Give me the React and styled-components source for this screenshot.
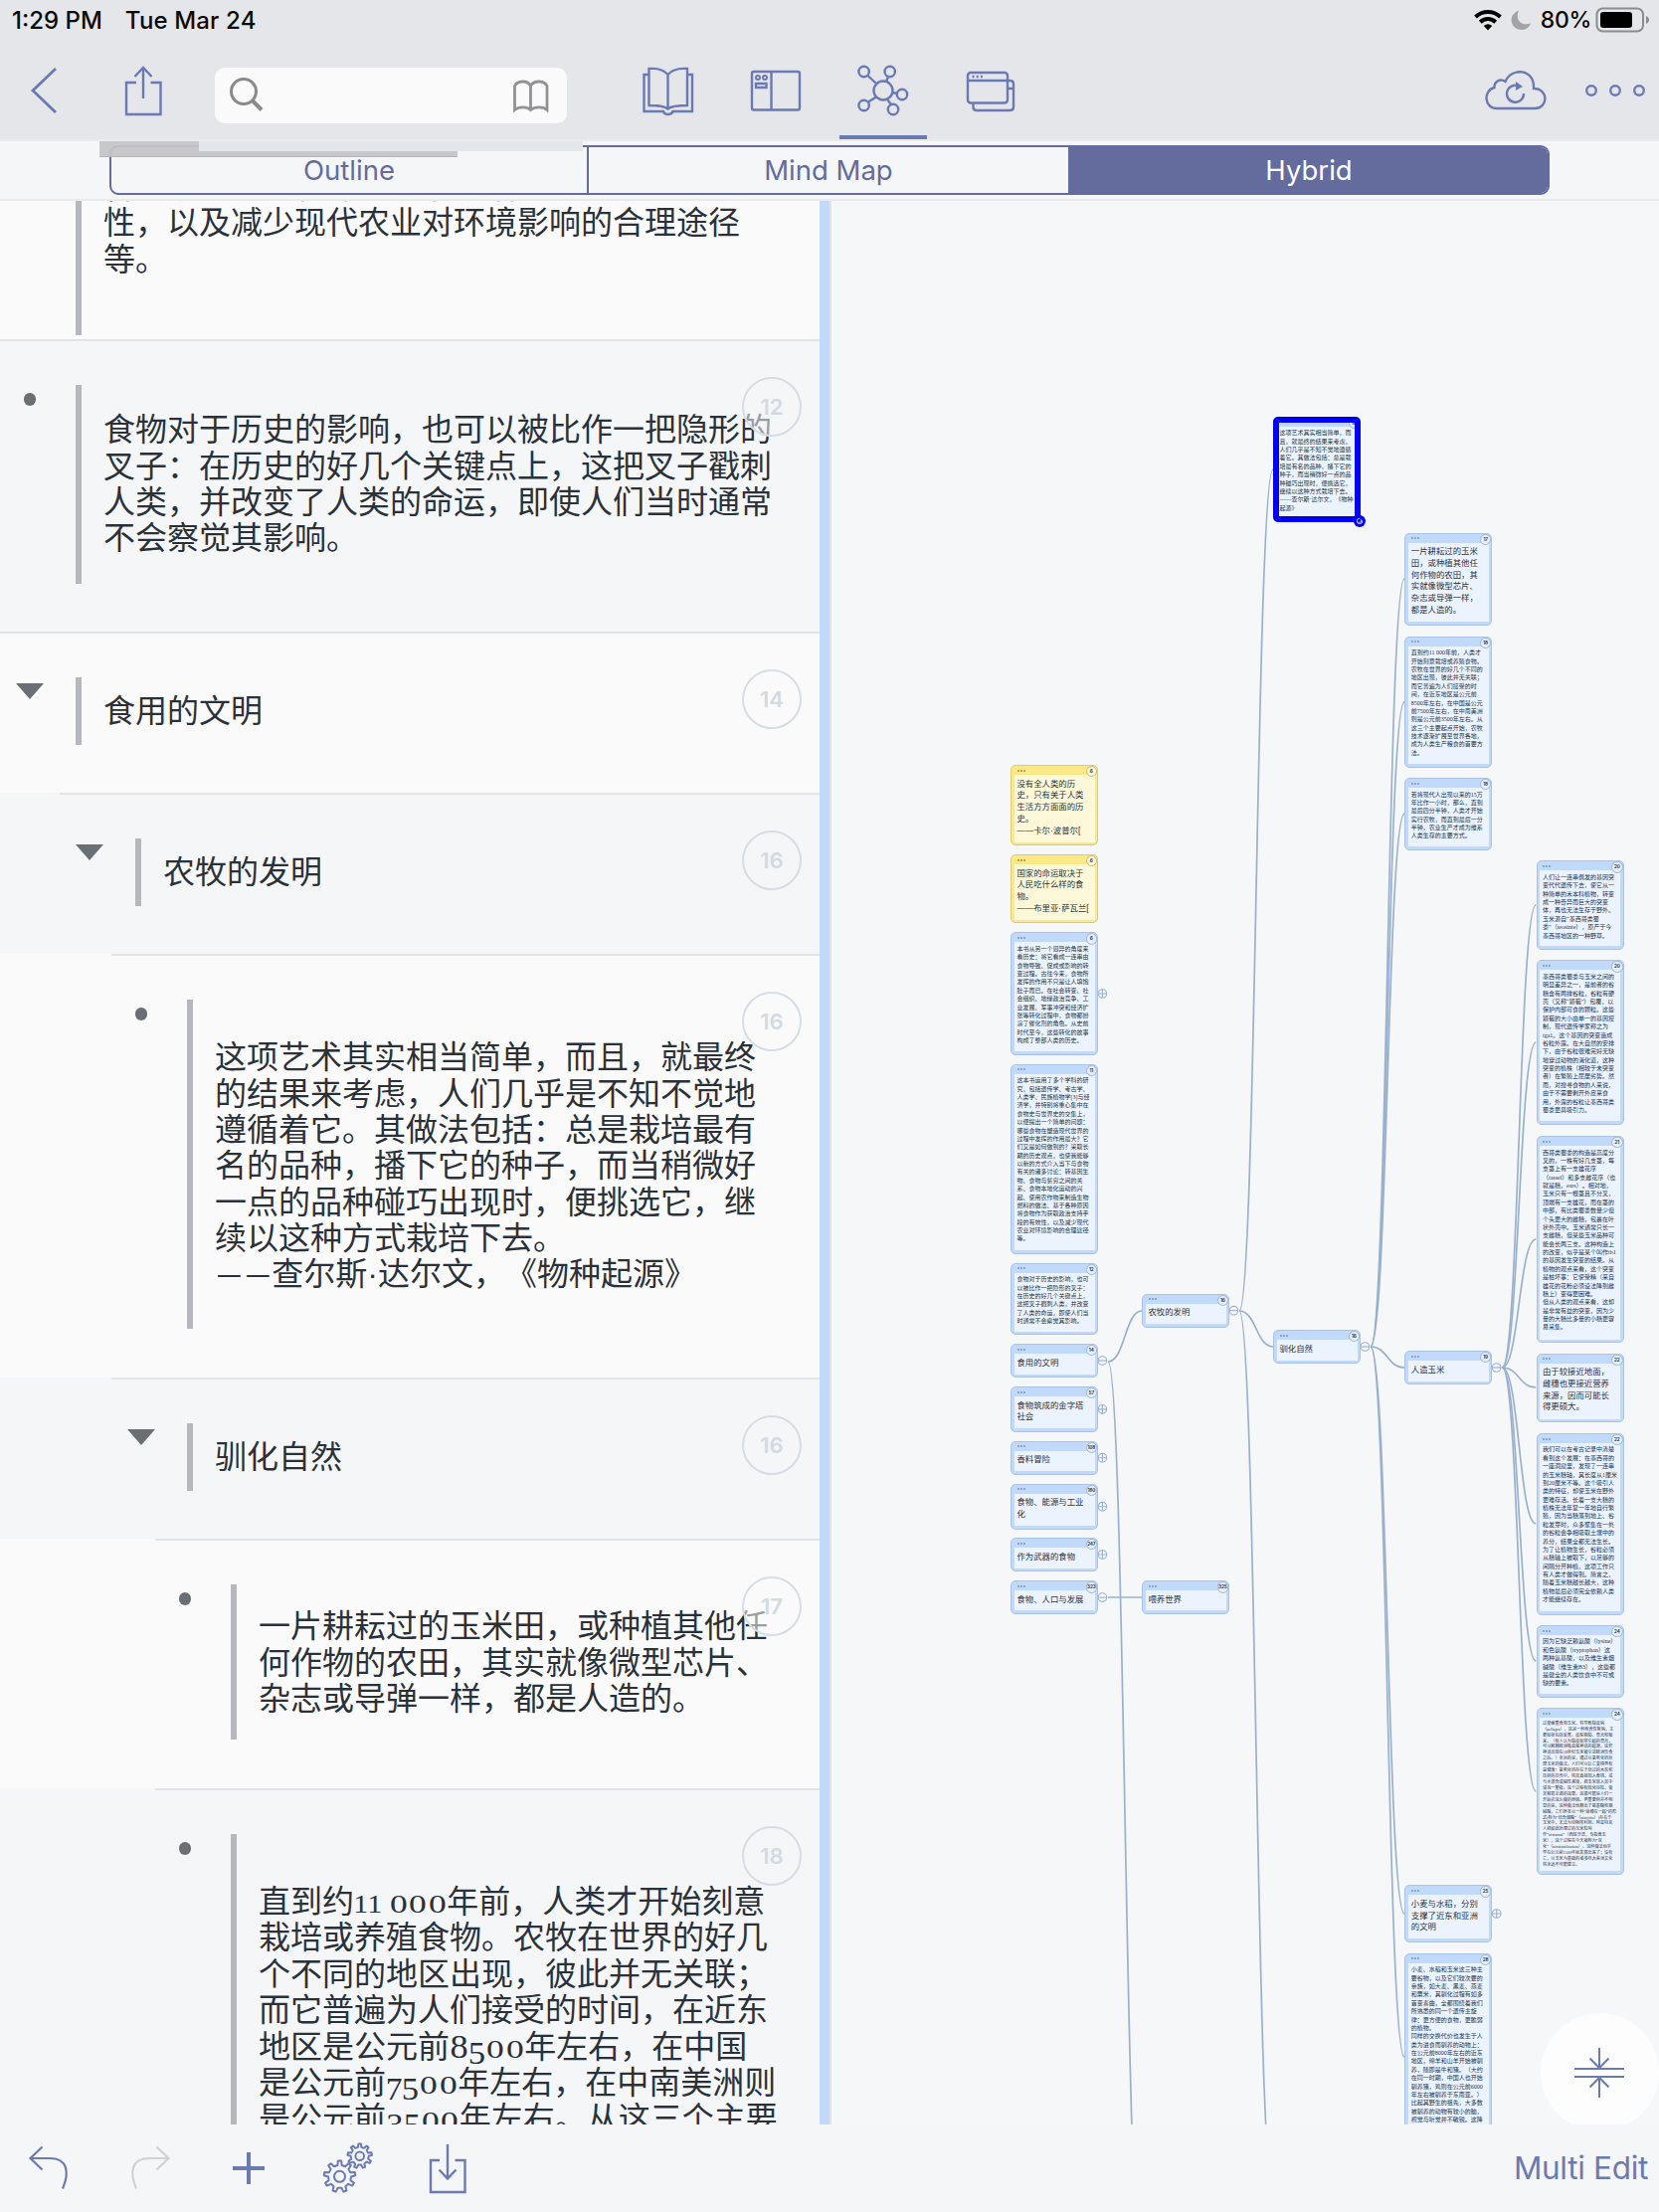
import React from "react";
import styled, { createGlobalStyle, css } from "styled-components";

const BLUE = "#6b7ab2";
const DEEP = "#636c9d";
const CJK = '"Noto Sans CJK SC", "Noto Sans", sans-serif';
const UI = 'Inter, "Liberation Sans", sans-serif';

const GlobalStyle = createGlobalStyle`
  html, body { margin: 0; padding: 0; background: #f4f6f8; }
  * { box-sizing: border-box; }
`;

const Screen = styled.div`
  width: 1668px;
  height: 2224px;
  display: flex;
  flex-direction: column;
  overflow: hidden;
  background: #f4f6f8;
  font-family: ${UI};
  text-spacing-trim: space-all;
`;

/* ---------- top bars ---------- */
const Header = styled.header`
  height: 142px;
  flex: none;
  display: flex;
  flex-direction: column;
  background: #e4e6ea;
  border-bottom: 2px solid #ebebed;
`;
const StatusBar = styled.div`
  height: 40px;
  display: flex;
  align-items: center;
  padding: 0 9px 0 12px;
  font-size: 24px;
  font-weight: 500;
  letter-spacing: 0;
  color: #0b0b0c;
  white-space: pre;
`;
const StatusDate = styled.span`
  margin-left: 23px;
  letter-spacing: 0.15px;
`;
const Charge = styled.span`
  margin-left: 9px;
  font-size: 23px;
  letter-spacing: -0.3px;
`;
const Spacer = styled.div`
  flex: 1;
`;
const Toolbar = styled.div`
  height: 100px;
  display: flex;
  align-items: flex-start;
`;
const Glyph = styled.svg`
  display: block;
  flex: none;
  margin-left: ${(p) => p.$gap || 0}px;
  fill: none;
  stroke: ${(p) => p.$ink || BLUE};
  stroke-width: ${(p) => p.$weight || 2.4};
`;
const SearchField = styled.div`
  width: 354px;
  height: 56px;
  margin: 28px 0 0 46px;
  padding: 0 17px 0 14px;
  border-radius: 10px;
  background: #fafafa;
  display: flex;
  align-items: center;
  justify-content: space-between;
`;
const ActiveTool = styled.div`
  width: 88px;
  height: 100px;
  margin-left: 32px;
  border-bottom: 4px solid ${BLUE};
`;

const SegmentBar = styled.div`
  position: relative;
  height: 60px;
  flex: none;
  padding: 4px 110px 0;
  border-bottom: 2px solid #e9eaec;
`;
const Segments = styled.div`
  display: flex;
  height: 50px;
  border: 2px solid ${DEEP};
  border-radius: 9px;
  overflow: hidden;
`;
const Segment = styled.div`
  width: ${(p) => p.$w}px;
  flex: none;
  display: flex;
  align-items: center;
  justify-content: center;
  font-size: 27.5px;
  color: ${(p) => (p.$on ? "#fff" : DEEP)};
  background: ${(p) => (p.$on ? DEEP : "transparent")};
  border-left: ${(p) => (p.$first ? 0 : 2)}px solid ${DEEP};
`;
const LoadingShade = styled.div`
  position: absolute;
  left: 100px;
  top: 0;
  width: 360px;
  height: 15.5px;
  background: rgba(197, 196, 201, 0.94);
  border-bottom: 1px solid #b4b4b8;
`;
const LoadingTrack = styled.div`
  position: absolute;
  left: 200px;
  top: 0;
  width: 386px;
  height: 10px;
  background: #e3e6ea;
`;

/* ---------- outline ---------- */
const Body = styled.main`
  height: 1934px;
  flex: none;
  display: flex;
`;
const Outline = styled.section`
  width: 824px;
  overflow: hidden;
`;
const Splitter = styled.div`
  width: 12px;
  background: #c1daf9;
  border-right: 2px solid #e2e3e6;
`;
const Row = styled.div`
  position: relative;
  height: ${(p) => p.$h}px;
  overflow: hidden;
  background: ${(p) => (p.$alt ? "#f4f6f8" : "#fafafa")};
`;
const Rule = styled.div`
  height: 2px;
  margin-left: ${(p) => p.$indent}px;
  background: #e2e3e4;
`;
const RowInner = styled.div`
  display: flex;
  align-items: flex-start;
  padding: ${(p) => p.$top}px 0 0 ${(p) => p.$indent}px;
`;
const Lead = styled.div`
  width: 76px;
  padding-right: 16px;
  display: flex;
  justify-content: center;
`;
const Bullet = styled.i`
  width: 12.5px;
  height: 12.5px;
  margin-top: 8px;
  border-radius: 50%;
  background: #6a6e75;
`;
const Arrow = styled.i`
  margin-top: 6px;
  border: 14px solid transparent;
  border-top: 16px solid #6a6e75;
  border-bottom: 0;
`;
const Quote = styled.div`
  height: ${(p) => p.$h}px;
  padding: ${(p) => p.$pad || 0}px 0 ${(p) => p.$lift || 0}px 22px;
  border-left: 6px solid #b5b9bd;
  display: flex;
  align-items: ${(p) => (p.$pad === undefined ? "center" : "flex-start")};
`;
const RowText = styled.div`
  font-family: ${CJK};
  font-size: 32px;
  line-height: 36.4px;
  color: #2b3138;
  white-space: pre;
  margin-top: ${(p) => p.$shift || 0}px;
`;
const Line = styled.div`
  height: 36.4px;
`;
const Digit = styled.span`
  display: inline-block;
  width: ${(p) => p.$w}px;
  font-family: "Liberation Serif", serif;
  font-size: ${(p) => p.$s}px;
  line-height: 24px;
  text-align: center;
  transform: scaleX(${(p) => p.$x});
  vertical-align: ${(p) => p.$v}px;
`;
const MidDot = styled.span`
  font-family: "Liberation Sans", sans-serif;
`;
const Dash = styled.span`
  display: inline-block;
  line-height: 24px;
  transform: scaleX(0.88);
`;
const PageBadge = styled.div`
  position: absolute;
  left: 746px;
  top: 38px;
  width: 60px;
  height: 60px;
  border: 2px solid #d6dde5;
  border-radius: 50%;
  background: ${(p) => (p.$alt ? "rgba(244,246,248,.55)" : "rgba(250,250,250,.55)")};
  display: flex;
  align-items: center;
  justify-content: center;
  font-size: 22px;
  font-weight: 600;
  color: #d3dae3;
`;

/* ---------- mind map ---------- */
const Canvas = styled.section`
  position: relative;
  width: 832px;
  height: 1934px;
  overflow: hidden;
  background: #f5f7f9;
`;
const Links = styled.svg`
  position: absolute;
  inset: 0;
  fill: none;
  stroke: #9ab1ce;
  stroke-width: 1.7;
`;
const Card = styled.div`
  position: absolute;
  left: ${(p) => p.$x - 836}px;
  top: ${(p) => p.$y - 202}px;
  width: 88px;
  height: ${(p) => p.$h}px;
  padding: 9px 2.5px 2.5px;
  border-radius: 5px;
  border: 1px solid ${(p) => (p.$yellow ? "#dccb76" : "#aac3e2")};
  background: ${(p) => (p.$yellow ? "#fae986" : "#c1dafb")};
`;
const CardDots = styled.div`
  position: absolute;
  left: 5.5px;
  top: 3.8px;
  display: flex;
  gap: 1px;
  i {
    width: 2px;
    height: 2px;
    background: ${(p) => (p.$yellow ? "#b5a65c" : "#8ea8c8")};
  }
`;
const CardBody = styled.div`
  height: 100%;
  padding: ${(p) => (p.$size === "l" ? 3.5 : 2.6)}px 0 0 3px;
  background: ${(p) => (p.$yellow ? "#fdf8d8" : "#ebf3fe")};
  color: #2b323c;
  white-space: pre;
  ${(p) =>
    p.$size === "l"
      ? css`font: 8.4px/11.75px "Liberation Sans", ${CJK};`
      : p.$size === "s"
      ? css`font: 6px/8.37px "Liberation Serif", ${CJK};`
      : css`font: 4.15px/5.92px "Liberation Serif", ${CJK};`}
`;
const CardBadge = styled.div`
  position: absolute;
  right: 0;
  top: 0;
  width: 11.4px;
  height: 11.4px;
  border-radius: 50%;
  border: 1px solid ${(p) => (p.$yellow ? "#c9bb78" : "#9fb6d3")};
  background: ${(p) => (p.$yellow ? "#fdf6cf" : "#e3eefc")};
  display: flex;
  align-items: center;
  justify-content: center;
  font-size: 4.6px;
  font-weight: 700;
  letter-spacing: -0.1px;
  color: #333a44;
`;
const Selection = styled.div`
  position: absolute;
  inset: -1px;
  border: 6px solid #0000f2;
  border-radius: 5px;
`;
const SelectionKnob = styled.svg`
  position: absolute;
  right: -6px;
  bottom: -6px;
`;
const Fab = styled.div`
  position: absolute;
  left: 712.5px;
  top: 1822px;
  width: 119px;
  height: 119px;
  border-radius: 50%;
  background: #fdfdfd;
  display: flex;
  align-items: center;
  justify-content: center;
`;

/* ---------- bottom bar ---------- */
const BottomBar = styled.footer`
  height: 88px;
  flex: none;
  display: flex;
  align-items: flex-start;
`;
const MultiEdit = styled.span`
  margin: 12px 11px 0 0;
  font-size: 31.5px;
  line-height: 64px;
  letter-spacing: -0.3px;
  color: ${BLUE};
`;

/* text figures [advance, size, shift, stretch]: x-height 0-2, descending 3 4 5 7 9 */
const FIGURES = {
  0: [19.6, 25, 0, 1.42], 1: [13.7, 25, 0, 1.2], 2: [18, 25, 0, 1.3],
  3: [17.6, 32, -6, 1.08], 4: [18, 32, -6, 1.08], 5: [17, 32, -6, 1.08],
  6: [19, 33, 0, 1.1], 7: [16.1, 32, -6, 1.05], 8: [19, 33, 0, 1.1], 9: [19, 32, -6, 1.08],
};
const figures = (text) =>
  text.split(/([0-9·—])/).map((c, i) => {
    const f = c.length === 1 && FIGURES[c];
    if (f) return <Digit key={i} $w={f[0]} $s={f[1]} $v={f[2]} $x={f[3]}>{c}</Digit>;
    if (c === "—") return <Dash key={i}>{c}</Dash>;
    return c === "·" ? <MidDot key={i}>{c}</MidDot> : c;
  });

const ROWS = [
  { h: 139, indent: 0, bar: 135, pad: 0, top: 0, shift: -35, noRule: true, lines: ["各种原因将食物作为获取政治支持手段的有效", "性，以及减少现代农业对环境影响的合理途径", "等。"] },
  { h: 294, indent: 0, bar: 200, lift: 6, lead: "dot", page: 12, lines: ["食物对于历史的影响，也可以被比作一把隐形的", "叉子：在历史的好几个关键点上，这把叉子戳刺", "人类，并改变了人类的命运，即使人们当时通常", "不会察觉其影响。"] },
  { h: 162, indent: 0, bar: 68, lift: 5, lead: "arrow", page: 14, lines: ["食用的文明"] },
  { h: 162, indent: 60, bar: 68, lift: 5, lead: "arrow", page: 16, lines: ["农牧的发明"] },
  { h: 426, indent: 112, bar: 331, lift: 2, lead: "dot", page: 16, lines: ["这项艺术其实相当简单，而且，就最终", "的结果来考虑，人们几乎是不知不觉地", "遵循着它。其做法包括：总是栽培最有", "名的品种，播下它的种子，而当稍微好", "一点的品种碰巧出现时，便挑选它，继", "续以这种方式栽培下去。", "——查尔斯·达尔文，《物种起源》"] },
  { h: 162, indent: 112, bar: 68, lift: 5, lead: "arrow", page: 16, lines: ["驯化自然"] },
  { h: 251, indent: 156, bar: 156, lift: 4, lead: "dot", page: 17, lines: ["一片耕耘过的玉米田，或种植其他任", "何作物的农田，其实就像微型芯片、", "杂志或导弹一样，都是人造的。"] },
  { h: 338, indent: 156, bar: 500, pad: 47, lead: "dot", page: 18, lines: ["直到约11 000年前，人类才开始刻意", "栽培或养殖食物。农牧在世界的好几", "个不同的地区出现，彼此并无关联；", "而它普遍为人们接受的时间，在近东", "地区是公元前8500年左右，在中国", "是公元前7500年左右，在中南美洲则", "是公元前3500年左右。从这三个主要"] },
];

const C = [1016, 1148, 1280, 1412.3, 1544.5];
const NODES = [
  { x: C[0], y: 769, h: 81, n: 6, s: "l", yellow: true, t: "没有全人类的历\n史，只有关于人类\n生活方方面面的历\n史。\n——卡尔·波普尔[" },
  { x: C[0], y: 859, h: 69, n: 6, s: "l", yellow: true, t: "国家的命运取决于\n人民吃什么样的食\n物。\n——布里亚·萨瓦兰[" },
  { x: C[0], y: 937.3, h: 123.4, n: 6, s: "s", g: "+", t: "本书从另一个迥异的角度来\n看历史：将它看成一连串由\n食物导致、促成或影响的转\n变过程。古往今来，食物所\n发挥的作用不只是让人填饱\n肚子而已。在社会转变、社\n会组织、地缘政治竞争、工\n业发展、军事冲突和经济扩\n张等转化过程中，食物都扮\n演了催化剂的角色。从史前\n时代至今，这些转化的故事\n构成了整部人类的历史。" },
  { x: C[0], y: 1069.7, h: 191, n: 11, s: "s", t: "这本书运用了多个学科的研\n究，包括遗传学、考古学、\n人类学、民族植物学[3]与经\n济学，并特别将重心集中在\n食物史与世界史的交集上，\n以便提出一个简单的问题：\n哪些食物在塑造现代世界的\n过程中发挥的作用最大？它\n们又是如何做到的？采取长\n期的历史观点，也使我能够\n以新的方式介入当下与食物\n有关的诸多讨论：转基因生\n物、食物与贫穷之间的关\n系、食物本地化运动的兴\n起、使用农作物来制造生物\n燃料的做法、基于各种原因\n将食物作为获取政治支持手\n段的有效性，以及减少现代\n农业对环境影响的合理途径\n等。" },
  { x: C[0], y: 1269.7, h: 72.6, n: 12, s: "s", t: "食物对于历史的影响，也可\n以被比作一把隐形的叉子：\n在历史的好几个关键点上，\n这把叉子戳刺人类，并改变\n了人类的命运，即使人们当\n时通常不会察觉其影响。" },
  { x: C[0], y: 1351, h: 34, n: 14, s: "l", g: "-", t: "食用的文明" },
  { x: C[0], y: 1394, h: 45.7, n: 57, s: "l", g: "+", t: "食物筑成的金字塔\n社会" },
  { x: C[0], y: 1448.7, h: 34, n: 108, s: "l", g: "+", t: "香料冒险" },
  { x: C[0], y: 1491.7, h: 46, n: 180, s: "l", g: "+", t: "食物、能源与工业\n化" },
  { x: C[0], y: 1546, h: 34, n: 247, s: "l", g: "+", t: "作为武器的食物" },
  { x: C[0], y: 1589.3, h: 33.6, n: 323, s: "l", g: "-", t: "食物、人口与发展" },
  { x: C[1], y: 1300.7, h: 34, n: 16, s: "l", g: "-", t: "农牧的发明" },
  { x: C[1], y: 1589.3, h: 33.6, n: 325, s: "l", t: "喂养世界" },
  { x: C[2], y: 418.7, h: 106.6, n: 16, s: "s", sel: true, t: "这项艺术其实相当简单，而\n且，就最终的结果来考虑，\n人们几乎是不知不觉地遵循\n着它。其做法包括：总是栽\n培最有名的品种，播下它的\n种子，而当稍微好一点的品\n种碰巧出现时，便挑选它，\n继续以这种方式栽培下去。\n——查尔斯·达尔文，《物种\n起源》" },
  { x: C[2], y: 1337, h: 34, n: 16, s: "l", g: "-", t: "驯化自然" },
  { x: C[3], y: 535.7, h: 93, n: 17, s: "l", t: "一片耕耘过的玉米\n田，或种植其他任\n何作物的农田，其\n实就像微型芯片、\n杂志或导弹一样，\n都是人造的。" },
  { x: C[3], y: 639.7, h: 132, n: 18, s: "s", t: "直到约11 000年前，人类才\n开始刻意栽培或养殖食物。\n农牧在世界的好几个不同的\n地区出现，彼此并无关联；\n而它普遍为人们接受的时\n间，在近东地区是公元前\n8500年左右，在中国是公元\n前7500年左右，在中南美洲\n则是公元前3500年左右。从\n这三个主要起点开始，农牧\n技术逐渐扩展至世界各地，\n成为人类生产粮食的首要方\n法。" },
  { x: C[3], y: 782, h: 72.7, n: 18, s: "s", t: "若将现代人出现以来的15万\n年比作一小时，那么，直到\n最后四分半钟，人类才开始\n实行农牧，而直到最后一分\n半钟，农业生产才成为维系\n人类生存的主要方式。" },
  { x: C[3], y: 1358, h: 34, n: 19, s: "l", g: "-", t: "人造玉米" },
  { x: C[3], y: 1895.3, h: 57.4, n: 25, s: "l", g: "+", t: "小麦与水稻，分别\n支撑了近东和亚洲\n的文明" },
  { x: C[3], y: 1963.7, h: 209, n: 28, s: "s", t: "小麦、水稻和玉米这三种主\n要谷物，以及它们较次要的\n亲族，如大麦、黑麦、燕麦\n和粟米，其驯化过程有如多\n首变奏曲，全都围绕着我们\n所熟悉的同一个遗传主旋\n律：更方便的食物，更脆弱\n的植物。\n同样的交换代价也发生于人\n类为进食而驯养的动物上：\n在公元前8000年左右的近东\n地区，绵羊和山羊开始被驯\n养，随即是牛和猪。（大约\n在同一时期，中国人也开始\n驯养猪，鸡则在公元前6000\n年左右被驯养于东南亚。）\n比起其野生的祖先，大多数\n被驯养的动物有较小的脑，\n视觉与听觉并不敏锐。这降" },
  { x: C[4], y: 865.3, h: 89.7, n: 20, s: "s", t: "人们让一连串偶发的基因突\n变代代遗传下去，使它从一\n种简单的禾本科植物，转变\n成一种奇异而巨大的突变\n体，再也无法生存于野外。\n玉米源自“墨西哥类蜀\n黍”（teosinte），原产于今\n墨西哥地区的一种野草。" },
  { x: C[4], y: 965.3, h: 165.7, n: 20, s: "s", t: "墨西哥类蜀黍与玉米之间的\n明显差异之一，是前者的谷\n穗含有两排谷粒，谷粒有硬\n壳（又称“颖苞”）包覆，以\n保护内部可食的颗粒。这些\n颖苞的大小由单一的基因控\n制，现代遗传学家称之为\ntga1。这个基因的突变造成\n谷粒外露。在大自然的安排\n下，由于谷粒很难完好无缺\n地穿过动物的消化道，这种\n突变的植株（相较于未突变\n者）在繁殖上屈居劣势。然\n而，对搜寻食物的人来说，\n由于不需要剥开外皮来食\n用，外露的谷粒让墨西哥类\n蜀黍更具吸引力。" },
  { x: C[4], y: 1142, h: 208, n: 21, s: "s", t: "西哥类蜀黍的构造是高度分\n叉的，一株有好几支茎，每\n支茎上有一支雄花序\n（tassel）和多支雌花序（也\n就是穗，ears）。相对地，\n玉米只有一根茎且不分叉，\n顶端有一支雄花，而在茎的\n中部，有比类蜀黍数量少但\n个头更大的雌穗，包裹在叶\n状外壳中。玉米通常只长一\n支雌穗，但某些玉米品种可\n能会长两三支。这种构造上\n的改变，似乎是某个叫作tb1\n的基因发生突变的结果。从\n植物的观点来看，这个突变\n是桩坏事：它使受精（来自\n雄花的花粉必须设法降到雌\n穗上）变得更困难。\n但从人类的观点来看，这却\n是非常有益的突变，因为少\n量的大穗比多量的小穗更容\n易采集。" },
  { x: C[4], y: 1360.5, h: 69.5, n: 22, s: "l", t: "由于较接近地面，\n雌穗也更接近营养\n来源，因而可能长\n得更硕大。" },
  { x: C[4], y: 1440.8, h: 182.8, n: 22, s: "s", t: "我们可以在考古记录中清楚\n看到这个发展：在墨西哥的\n一座洞窟里，发现了一连串\n的玉米穗轴，其长度从1厘米\n到20厘米不等。这个吸引人\n类的特征，却使玉米在野外\n更难存活。长着一支大穗的\n植株无法年复一年地自行繁\n殖，因为当穗落到地上、谷\n粒发芽时，众多聚集在一处\n的谷粒会争相吸取土壤中的\n养分，结果全都无法生长。\n为了让植物生长，谷粒必须\n从穗轴上被取下，以足够的\n间隔分开种植，这项工作只\n有人类才做得到。简言之，\n随着玉米穗越长越大，这种\n植物最后必须完全依赖人类\n才能继续存在。" },
  { x: C[4], y: 1633.8, h: 73.2, n: 24, s: "s", t: "因为它缺乏赖氨酸（lysine）\n和色氨酸（tryptophan）这\n两种氨基酸，以及维生素烟\n碱酸（维生素B3），这些都\n是健全的人类饮食中不可或\n缺的要素。" },
  { x: C[4], y: 1717.2, h: 167.7, n: 24, s: "xs", t: "过度偏重食用玉米，将导致糙皮病\n（pellagra），这是一种营养性疾病，主\n要症状包括反胃、皮肤粗糙、畏光和痴\n呆。（有人认为糙皮症所引起的畏光，\n可以解释欧洲吸血鬼神话的起源，这些\n神话出现在18世纪玉米被引进欧洲饮食\n之后。）幸运的是，通过以氢氧化钙处\n理玉米的做法，人们可以让它变得更有\n益健康：氢氧化钙存在于烧过的木灰和\n压碎的贝壳中，将其直接加入煮锅，或\n与水混合成碱性溶液，把玉米放入其中\n浸泡一整夜。这个过程有软化谷粒，使\n其容易烹调的效果。这很可能是人们一\n开始会这么做的原因。更重要但并不明\n显的是，这种做法也释出了氨基酸和烟\n碱酸，它们原本以一种“锁缚在一起”的形\n式(称为“结合烟酸”（niacytin）)存在于\n玉米中，无法为动物所利用。阿兹特克\n人把如此处理过的玉米粒叫\n作“nixtamal”（西班牙语，专指煮玉\n米），这个过程在今天被称为“灰\n化”（nixtamalization）。这种做法似乎\n早在公元前1500年就发展出来了；没有\n它，以玉米为基础的诸多伟大美洲文化\n将永远不可能建立。" },
];

const LINKS = [
  [C[0], 1369, [1318, 2278]],
  [C[1], 1318, [472, 1354, 2204]],
  [C[2], 1354, [582, 705.7, 818.3, 1375, 1924, 2068]],
  [C[3], 1375, [910, 1048, 1246, 1395, 1532, 1670, 1801]],
  [C[0], 1606, [1606]],
];

const curve = (x, y, ty) => {
  const a = x + 98, b = x + 132, m = (a + b) / 2;
  return `M${a} ${y}C${m} ${y} ${m} ${ty} ${b} ${ty}`;
};

const gear = (cx, cy, outer, inner, teeth) => {
  const pts = [];
  for (let i = 0; i < teeth; i++) {
    const step = (Math.PI * 2) / teeth, a = i * step - Math.PI / 2;
    [[-0.27, inner], [-0.15, outer], [0.15, outer], [0.27, inner]].forEach(([k, r]) =>
      pts.push(`${(cx + r * Math.cos(a + k * step)).toFixed(2)} ${(cy + r * Math.sin(a + k * step)).toFixed(2)}`)
    );
  }
  return `M${pts.join("L")}Z`;
};

const Icon = ({ box, ...rest }) => {
  const [, , w, h] = box;
  return <Glyph width={w} height={h} viewBox={box.join(" ")} {...rest} />;
};

function OutlineRow({ row, index }) {
  const alt = index % 2 === 1;
  return (
    <Row $h={row.h} $alt={alt}>
      {!row.noRule && <Rule $indent={row.indent} />}
      <RowInner $indent={row.indent} $top={row.top ?? 44}>
        <Lead>
          {row.lead === "dot" && <Bullet />}
          {row.lead === "arrow" && <Arrow />}
        </Lead>
        <Quote $h={row.bar} $pad={row.pad} $lift={row.lift}>
          <RowText $shift={row.shift}>
            {row.lines.map((l) => (
              <Line key={l}>{figures(l)}</Line>
            ))}
          </RowText>
        </Quote>
      </RowInner>
      {row.page && <PageBadge $alt={alt}>{row.page}</PageBadge>}
    </Row>
  );
}

function MapCard({ node }) {
  return (
    <Card $x={node.x} $y={node.y} $h={node.h} $yellow={node.yellow}>
      <CardDots $yellow={node.yellow}><i /><i /><i /></CardDots>
      <CardBody $size={node.s} $yellow={node.yellow}>{node.t}</CardBody>
      <CardBadge $yellow={node.yellow}>{node.n}</CardBadge>
      {node.sel && (
        <>
          <Selection />
          <SelectionKnob width="12" height="12" viewBox="0 0 12 12">
            <circle cx="6" cy="6" r="6" fill="#0000f2" />
            <path d="M8.6 5.2A2.7 2.7 0 1 1 6.4 3.3M4.6 7.2H7.4V4.4" fill="none" stroke="#dfe6ff" strokeWidth="0.8" />
          </SelectionKnob>
        </>
      )}
    </Card>
  );
}

export default function App() {
  return (
    <>
      <GlobalStyle />
      <Screen>
        <Header>
          <StatusBar>
            <span>1:29 PM</span>
            <StatusDate>Tue Mar 24</StatusDate>
            <Spacer />
            <Icon box={[1481, 8, 30, 24]} $ink="#000" $weight={4}>
              <path d="M1483.5 17A18 18 0 0 1 1508.500 17M1488.300 22.200A11 11 0 0 1 1503.700 22.200" />
              <path d="M1496 30.500L1491.800 26A6 6 0 0 1 1500.200 26Z" fill="#000" stroke="none" />
            </Icon>
            <Icon box={[1519, 8, 21, 22]} $gap={8} $ink="none">
              <path d="M1527 9.500C1520 12 1517.500 19 1521.500 25C1526 31 1536 30.500 1539 22.500C1529 25.500 1523 18.500 1527 9.500Z" fill="#a3a4a8" />
            </Icon>
            <Charge>80%</Charge>
            <Icon box={[1604, 7, 55, 26]} $gap={4} $ink="#8b8c90" $weight={2}>
              <rect x="1605.500" y="8.500" width="46.500" height="23" rx="6" />
              <rect x="1609" y="12" width="32" height="16" rx="3" fill="#000" stroke="none" />
              <path d="M1655 16C1659 17.500 1659 22.500 1655 24Z" fill="#8b8c90" stroke="none" />
            </Icon>
          </StatusBar>
          <Toolbar>
            <Icon box={[24, 40, 40, 90]} $gap={24} $weight={2.8}>
              <path d="M56 69L33 91L56 113" />
            </Icon>
            <Icon box={[118, 40, 52, 90]} $gap={54}>
              <path d="M137 83H127V115H161.500V83H151.500M144 99V68M135.500 77L144 68L152.500 77" />
            </Icon>
            <SearchField>
              <Icon box={[230, 78, 36, 36]} $ink="#8a8a8d" $weight={3}>
                <circle cx="245" cy="92" r="12.5" />
                <path d="M253.500 101L263 110.500" strokeWidth="4" />
              </Icon>
              <Icon box={[515, 79, 38, 34]} $ink="#929294" $weight={2.8}>
                <path d="M517.500 110.500V86.500C520 81 530.500 80 533.500 86.500C537 80 547.500 81 550 86.500V110.500C546 107 537.500 107 533.500 110.500C530 107 521.500 107 517.500 110.500ZM533.500 86.500V110.500" />
              </Icon>
            </SearchField>
            <Icon box={[640, 40, 64, 90]} $gap={70}>
              <path d="M671.500 75C667 69.500 659 68.500 652.500 69V106C660 106 667 106 671.500 109.500C676 106 684 106 691 106V69C684 68.500 676 69.500 671.500 75V109M652.500 75H647.500V112H667C668 116 675 116 676.500 112H696V75H691" />
            </Icon>
            <Icon box={[748, 40, 64, 90]} $gap={44}>
              <rect x="756" y="72" width="48" height="38.500" rx="2" />
              <path d="M775.500 72V110.500M760 84H770.500V88H760Z" />
              <circle cx="762" cy="78" r="2" strokeWidth="2" />
              <circle cx="769" cy="78" r="2" strokeWidth="2" />
            </Icon>
            <ActiveTool>
              <Icon box={[844, 40, 88, 90]}>
                <circle cx="888" cy="91" r="9.500" />
                <circle cx="868.600" cy="72" r="5.200" />
                <circle cx="894.700" cy="72" r="5.200" />
                <circle cx="907" cy="95" r="5.200" />
                <circle cx="898" cy="110" r="5.200" />
                <circle cx="868.600" cy="106" r="5.200" />
                <path d="M872.500 76L881 84M893 77L891 82M897.500 93L902 94M892 100L896 105M881 97.500L873 102.500" />
              </Icon>
            </ActiveTool>
            <Icon box={[966, 40, 60, 90]} $gap={34}>
              <rect x="973" y="73" width="40" height="30.500" rx="3" />
              <path d="M973 81H1013M978.500 104V107.500Q978.500 111 982 111H1015.500Q1019 111 1019 107.500V84.500Q1019 81 1015.500 81H1013M1013 89H1019" />
              <path d="M977.500 77H988" strokeDasharray="2 2.200" />
            </Icon>
            <Spacer />
            <Icon box={[1490, 40, 68, 90]}>
              <path d="M1505 109C1492 109 1491 91 1502.500 88C1502 82 1508 78.500 1513.500 82C1519 68 1543 68 1542 89C1557 89 1557 109 1543 109Z" />
              <path d="M1532 94A8.500 8.500 0 1 1 1527 86.500" />
              <path d="M1524 82L1531 87L1524 91Z" fill={BLUE} stroke="none" />
            </Icon>
            <Icon box={[1592, 40, 76, 90]} $gap={34}>
              <circle cx="1600" cy="91" r="4.800" />
              <circle cx="1624" cy="91" r="4.800" />
              <circle cx="1648" cy="91" r="4.800" />
            </Icon>
          </Toolbar>
        </Header>

        <SegmentBar>
          <Segments>
            <Segment $w={478} $first>Outline</Segment>
            <Segment $w={484}>Mind Map</Segment>
            <Segment $w={482} $on>Hybrid</Segment>
          </Segments>
          <LoadingShade />
          <LoadingTrack />
        </SegmentBar>

        <Body>
          <Outline>
            {ROWS.map((row, i) => (
              <OutlineRow key={i} row={row} index={i} />
            ))}
          </Outline>
          <Splitter />
          <Canvas>
            <Links width="832" height="1934" viewBox="836 202 832 1934">
              {LINKS.map(([x, y, targets]) => targets.map((t) => <path key={`${x}-${t}`} d={curve(x, y, t)} />))}
              {NODES.filter((n) => n.g).map((n) => {
                const cx = n.x + 92.4, cy = n.y + n.h / 2;
                return (
                  <g key={n.t} strokeWidth="1.1">
                    <circle cx={cx} cy={cy} r="4.3" fill="#f5f7f9" />
                    <path d={`M${cx - 4.3} ${cy}h8.600${n.g === "+" ? `M${cx} ${cy - 4.3}v8.600` : ""}`} />
                  </g>
                );
              })}
            </Links>
            {NODES.map((n) => (
              <MapCard key={`${n.x}-${n.y}`} node={n} />
            ))}
            <Fab>
              <Icon box={[1580, 2055, 56, 58]} $weight={2}>
                <path d="M1583 2080H1633M1583 2088H1633M1608 2059V2079M1598.500 2069.500L1608 2079L1617.500 2069.500M1608 2109V2089M1598.500 2098.500L1608 2089L1617.500 2098.500" />
              </Icon>
            </Fab>
          </Canvas>
        </Body>

        <BottomBar>
          <Icon box={[26, 2136, 48, 80]} $gap={26} $weight={2.2}>
            <path d="M42.500 2158.500L30.500 2170L42.500 2181.500M30.500 2170H50C68 2170 70 2184 63 2200.500" />
          </Icon>
          <Icon box={[126, 2136, 48, 80]} $gap={52} $ink="#cfd1d4" $weight={2.2}>
            <path d="M157.500 2158.500L169.500 2170L157.500 2181.500M169.500 2170H150C132 2170 130 2184 137 2200.500" />
          </Icon>
          <Icon box={[230, 2136, 40, 80]} $gap={56} $weight={4}>
            <path d="M234 2180H266M250 2164V2196" />
          </Icon>
          <Icon box={[322, 2136, 56, 80]} $gap={52} $weight={2}>
            <path d={gear(361.7, 2167.7, 12.3, 9, 9)} strokeLinejoin="round" />
            <circle cx="361.700" cy="2167.700" r="4.300" />
            <path d={gear(341.5, 2188.3, 15.8, 11.5, 9)} fill="#f4f6f8" strokeLinejoin="round" />
            <circle cx="341.500" cy="2188.300" r="5.500" />
          </Icon>
          <Icon box={[428, 2136, 44, 80]} $gap={50}>
            <path d="M442 2172H433V2204H467.500V2172H457.500M450 2156V2190M441.500 2181.500L450 2190.500L458.500 2181.500" />
          </Icon>
          <Spacer />
          <MultiEdit>Multi Edit</MultiEdit>
        </BottomBar>
      </Screen>
    </>
  );
}
